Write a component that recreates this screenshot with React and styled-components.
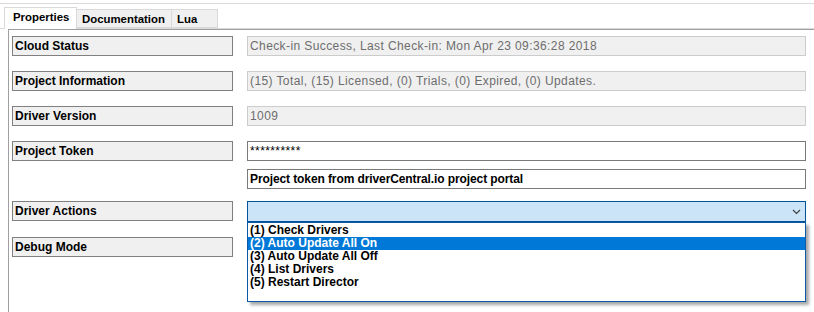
import React from "react";
import styled, { createGlobalStyle } from "styled-components";

const GlobalStyle = createGlobalStyle`
  html, body { margin: 0; padding: 0; background: #ffffff; }
  body { font-family: "Liberation Sans", Arial, sans-serif; }
  * { box-sizing: border-box; }
`;

const Window = styled.div`
  width: 814px;
  height: 312px;
  overflow: hidden;
  padding-top: 3px;
  background: #ffffff;
`;

const TopRule = styled.div`
  height: 1px;
  background: #d9d9d9;
`;

const TabStrip = styled.div`
  display: flex;
  align-items: flex-end;
  height: 25px;
  padding-left: 4px;
  border-bottom: 1px solid #d9d9d9;
`;

const Tab = styled.div`
  height: ${(p) => (p.$active ? 22 : 19)}px;
  margin-left: ${(p) => (p.$first ? 0 : -1)}px;
  margin-bottom: ${(p) => (p.$active ? -1 : 0)}px;
  position: relative;
  z-index: ${(p) => (p.$active ? 1 : 0)};
  border: 1px solid #d9d9d9;
  border-bottom: ${(p) => (p.$active ? "none" : "1px solid #d9d9d9")};
  background: ${(p) => (p.$active ? "#ffffff" : "#f0f0f0")};
  padding-left: ${(p) => (p.$active ? 8 : 5)}px;
  padding-top: 3px;
  font-size: 11.4px;
  font-weight: bold;
  color: #000;
  line-height: 13px;
  white-space: nowrap;
`;

const Panel = styled.div`
  margin-left: 8px;
  border-left: 1px solid #a0a0a0;
  border-top: 1px solid #a0a0a0;
  height: 300px;
  padding: 6px 0 0 3px;
`;

const Row = styled.div`
  display: grid;
  grid-template-columns: 221px 559px;
  column-gap: 14px;
  margin-top: ${(p) => p.$top || 0}px;
  align-items: start;
`;

const Label = styled.div`
  height: 20px;
  border: 1px solid #808080;
  background: #f0f0f0;
  padding-left: 2px;
  font-size: 12px;
  font-weight: bold;
  line-height: 18px;
  color: #000;
  white-space: nowrap;
`;

const Field = styled.div`
  height: 20px;
  border: 1px solid ${(p) => (p.$readonly ? "#cccccc" : "#7a7a7a")};
  background: ${(p) => (p.$readonly ? "#f0f0f0" : "#ffffff")};
  color: ${(p) => (p.$readonly ? "#6d6d6d" : "#000000")};
  font-weight: ${(p) => (p.$bold ? "bold" : "normal")};
  letter-spacing: ${(p) => (p.$bold ? "-0.1px" : "0.4px")};
  padding-left: 2px;
  font-size: 12px;
  line-height: 18px;
  white-space: nowrap;
  overflow: hidden;
`;

const ComboWrap = styled.div`
  position: relative;
`;

const Combo = styled.div`
  height: 21px;
  border: 1px solid #005499;
  background: #cce4f7;
  display: flex;
  justify-content: flex-end;
  align-items: center;
  padding-right: 4px;
`;

const DropList = styled.div`
  position: absolute;
  top: 21px;
  left: 0;
  right: 0;
  height: 80px;
  border: 1px solid #0a5aa8;
  background: #ffffff;
  padding-top: 1px;
  box-shadow: 3px 3px 3px rgba(0, 0, 0, 0.35);
  z-index: 5;
`;

const Option = styled.div`
  height: 13px;
  line-height: 13px;
  padding-left: 2px;
  font-size: 12px;
  font-weight: bold;
  white-space: nowrap;
  background: ${(p) => (p.$selected ? "#0078d7" : "transparent")};
  color: ${(p) => (p.$selected ? "#ffffff" : "#000000")};
`;

const Chevron = () => (
  <svg width="9" height="6" viewBox="0 0 9 6">
    <polyline points="1,1 4.5,4.5 8,1" fill="none" stroke="#3c3c3c" strokeWidth="1.1" />
  </svg>
);

const tabs = [
  { name: "Properties", width: 73, active: true },
  { name: "Documentation", width: 96 },
  { name: "Lua", width: 47 },
];

const options = [
  "(1) Check Drivers",
  "(2) Auto Update All On",
  "(3) Auto Update All Off",
  "(4) List Drivers",
  "(5) Restart Director",
];

export default function App() {
  return (
    <>
      <GlobalStyle />
      <Window>
        <TopRule />
        <TabStrip>
          {tabs.map((t, i) => (
            <Tab key={t.name} $active={t.active} $first={i === 0} style={{ width: t.width }}>
              {t.name}
            </Tab>
          ))}
        </TabStrip>
        <Panel>
          <Row>
            <Label>Cloud Status</Label>
            <Field $readonly>Check-in Success, Last Check-in: Mon Apr 23 09:36:28 2018</Field>
          </Row>
          <Row $top={15}>
            <Label>Project Information</Label>
            <Field $readonly>(15) Total, (15) Licensed, (0) Trials, (0) Expired, (0) Updates.</Field>
          </Row>
          <Row $top={15}>
            <Label>Driver Version</Label>
            <Field $readonly>1009</Field>
          </Row>
          <Row $top={15}>
            <Label>Project Token</Label>
            <Field>**********</Field>
          </Row>
          <Row $top={8}>
            <div />
            <Field $bold>Project token from driverCentral.io project portal</Field>
          </Row>
          <Row $top={12}>
            <Label>Driver Actions</Label>
            <ComboWrap>
              <Combo>
                <Chevron />
              </Combo>
              <DropList>
                {options.map((o, i) => (
                  <Option key={o} $selected={i === 1}>
                    {o}
                  </Option>
                ))}
              </DropList>
            </ComboWrap>
          </Row>
          <Row $top={15}>
            <Label>Debug Mode</Label>
          </Row>
        </Panel>
      </Window>
    </>
  );
}
